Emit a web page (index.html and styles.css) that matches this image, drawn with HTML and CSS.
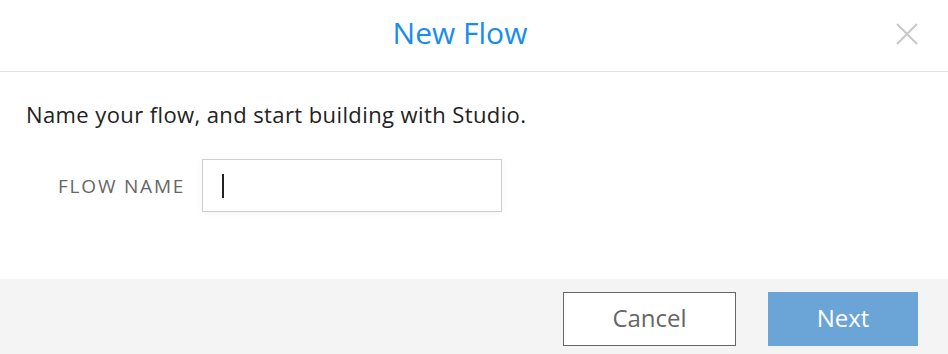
FILE: index.html
```html
<!DOCTYPE html>
<html>
<head>
<meta charset="utf-8">
<link rel="stylesheet" href="styles.css">
</head>
<body>
<div class="modal">
  <header class="modal-header">
    <h1 class="modal-title">New Flow</h1>
    <button class="close" aria-label="Close">
      <svg width="22" height="22" viewBox="0 0 22 22"><path d="M1 1 L21 21 M21 1 L1 21" stroke="#c8c8c8" stroke-width="2" fill="none"/></svg>
    </button>
  </header>
  <main class="modal-body">
    <p class="intro">Name your flow, and start building with Studio.</p>
    <div class="field">
      <label class="field-label" for="flow-name">FLOW NAME</label>
      <div class="input"><span class="caret"></span></div>
    </div>
  </main>
  <footer class="modal-footer">
    <button class="btn btn-cancel">Cancel</button>
    <button class="btn btn-next">Next</button>
  </footer>
</div>
</body>
</html>
```
FILE: styles.css
```css
* { box-sizing: border-box; }
html, body { margin: 0; padding: 0; background: #fff; }
body { font-family: "Open Sans", "Lato", sans-serif; width: 948px; height: 354px; overflow: hidden; }
.modal { display: flex; flex-direction: column; height: 354px; }
.modal-header {
  height: 72px;
  border-bottom: 1px solid #e3e3e3;
  display: flex; align-items: center; justify-content: center;
  padding: 0 28px 6px 0;
  position: relative;
}
.modal-title { margin: 0; font-weight: 400; font-size: 30px; line-height: 40px; color: #198cf0; }
.close {
  position: absolute; right: 30px; top: 23px;
  padding: 0; border: 0; background: none; width: 22px; height: 22px; display: block;
}
.close svg { display: block; }
.modal-body { flex: 1; padding: 27px 26px 0; }
.intro { margin: 0; font-size: 22px; color: #222; line-height: 30px; letter-spacing: 0.4px; }
.field { display: flex; align-items: center; margin-top: 30px; padding-left: 32px; }
.field-label { font-size: 19px; color: #666; letter-spacing: 1.8px; margin-right: 17px; flex: none; }
.input {
  width: 300px; height: 53px; border: 1px solid #cfcfcf; background: #fff;
  box-shadow: 0 1px 6px rgba(0,0,0,0.06);
  display: flex; align-items: center; padding-left: 19px;
}
.caret { width: 2px; height: 24px; background: #222; }
.modal-footer {
  height: 75px; background: #f4f4f4;
  display: flex; justify-content: flex-end; align-items: flex-start; gap: 32px;
  padding: 13px 30px 0 0;
}
.btn { height: 54px; font-family: inherit; font-size: 24px; padding: 0 0 3px; cursor: pointer; }
.btn-cancel { width: 173px; border: 1px solid #666; background: #fff; color: #666; }
.btn-next { width: 150px; border: 0; background: #6ba5d7; color: #fff; }
```
